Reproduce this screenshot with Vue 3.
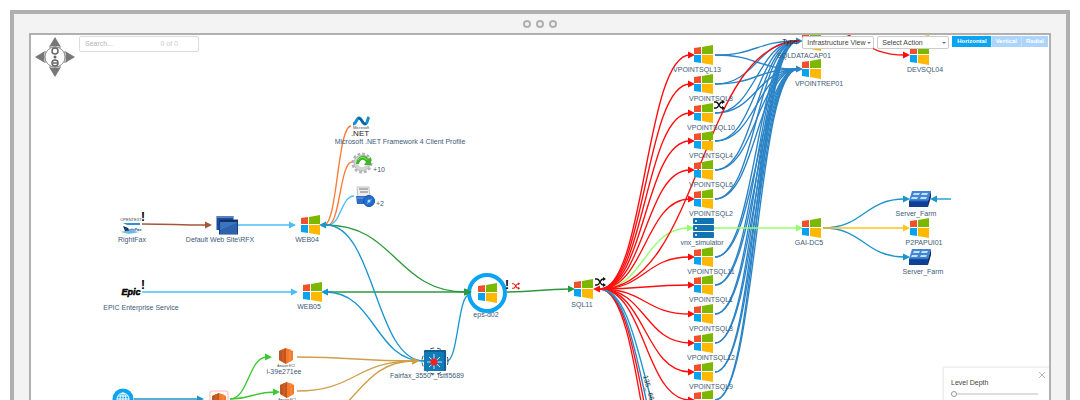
<script setup>
import { ref } from 'vue'

const LAYOUTS = ['Horizontal', 'Vertical', 'Radial']

const RED = '#ff0d0d'
const BLUE = '#2a83c6'
const CYAN = '#1a96cd'
const SKY = '#4dbdf7'
const GREEN = '#2a9a3c'
const ORANGE = '#fb7a35'
const TAN = '#cfa04a'

const view = ref('Infrastructure View')
const action = ref('Select Action')
const layout = ref('Horizontal')
const search = ref('')
const depth = ref(0)
const panelOpen = ref(true)

const sqlServers = [
  { name: 'VPOINTSQL13', y: 55, labelX: 697 },
  { name: 'VPOINTSQL8', y: 84 },
  { name: 'VPOINTSQL10', y: 113 },
  { name: 'VPOINTSQL4', y: 141 },
  { name: 'VPOINTSQL6', y: 170 },
  { name: 'VPOINTSQL2', y: 199 },
  { name: 'VPOINTSQL11', y: 257 },
  { name: 'VPOINTSQL1', y: 285 },
  { name: 'VPOINTSQL3', y: 314 },
  { name: 'VPOINTSQL12', y: 343 },
  { name: 'VPOINTSQL9', y: 372 },
  { y: 400 },
]

const nodes = [
  ...sqlServers.map((s) => ({
    icon: 'windows',
    x: 704,
    y: s.y,
    label: s.name,
    labelX: s.labelX ?? 711,
  })),
  { icon: 'storage', x: 704, y: 228, label: 'vnx_simulator', labelX: 702 },
  { icon: 'windows', x: 812, y: 41, label: 'SQLDATACAP01', labelX: 804 },
  { icon: 'windows', x: 812, y: 69, label: 'VPOINTREP01', labelX: 819 },
  { icon: 'windows', x: 812, y: 228, label: 'GAI-DC5', labelX: 809 },
  { icon: 'windows', x: 920, y: 26 },
  { icon: 'windows', x: 920, y: 55, label: 'DEVSQL04', labelX: 925 },
  { icon: 'farm', x: 920, y: 199, label: 'Server_Farm', labelX: 916 },
  { icon: 'windows', x: 920, y: 228, label: 'P2PAPUI01', labelX: 924 },
  { icon: 'farm', x: 920, y: 257, label: 'Server_Farm', labelX: 923 },
  { icon: 'rightfax', x: 131, y: 225, label: 'RightFax', labelX: 132 },
  { icon: 'website', x: 227, y: 225, label: 'Default Web Site\\RFX', labelX: 220 },
  { icon: 'windows', x: 311, y: 225, label: 'WEB04', labelX: 307 },
  { icon: 'epic', x: 131, y: 292, label: 'EPIC Enterprise Service', labelX: 141, drop: 18 },
  { icon: 'windows', x: 313, y: 292, label: 'WEB05', labelX: 309 },
  { icon: 'dotnet', x: 361, y: 127, label: 'Microsoft .NET Framework 4 Client Profile', labelX: 400 },
  { icon: 'gear', x: 362, y: 163, label: '+10', labelX: 379, drop: 9 },
  { icon: 'installer', x: 365, y: 197, label: '+2', labelX: 380, drop: 9 },
  { icon: 'windows', x: 488, y: 293, label: 'eps-d02', labelX: 486, drop: 24 },
  { icon: 'windows', x: 584, y: 289, label: 'SQL11', labelX: 582, drop: 18 },
  { icon: 'switch', x: 435, y: 361, label: 'Fairfax_3550*_fstfl5689', labelX: 427 },
  { icon: 'ec2', x: 286, y: 357, label: 'i-39e271ee', labelX: 284 },
  { icon: 'ec2', x: 287, y: 391 },
  { icon: 'ec2', x: 219, y: 402 },
  { icon: 'globe', x: 123, y: 399 },
]

const edges = [
  ...sqlServers.flatMap((s) => [
    edge(715, s.y, 798, 41, BLUE, false),
    edge(715, s.y, 798, 69, BLUE, false),
  ]),
  edge(790, 41, 803, 41, BLUE),
  edge(790, 69, 803, 69, BLUE),
  edge(600, 289, 694, 228, '#95ff6b'),
  ...sqlServers.map((s) => edge(600, 289, 695, s.y, RED)),
  edge(600, 289, 694, 520, RED),
  edge(600, 289, 694, 555, RED),
  edge(600, 289, 694, 495, BLUE),
  edge(600, 289, 694, 460, CYAN),
  edge(600, 289, 800, 41, RED, false),
  edge(714, 228, 803, 228, '#95ff6b'),
  edge(823, 228, 910, 199, CYAN),
  edge(823, 228, 910, 257, CYAN),
  edge(823, 228, 910, 228, '#ffc31f'),
  edge(951, 199, 930, 199, CYAN),
  edge(815, 28, 910, 55, RED),
  edge(142, 224, 212, 225, '#a5563a'),
  edge(238, 225, 296, 225, SKY),
  edge(142, 292, 298, 292, SKY),
  edge(324, 225, 351, 126, ORANGE, false),
  edge(328, 225, 352, 162, ORANGE, false),
  edge(328, 225, 354, 196, SKY, false),
  edge(326, 225, 471, 292, GREEN),
  edge(326, 292, 471, 292, GREEN),
  edge(326, 225, 424, 361, CYAN, false),
  edge(326, 292, 424, 361, CYAN, false),
  edge(332, 225, 319, 225, CYAN),
  edge(332, 292, 321, 292, CYAN),
  edge(297, 357, 419, 361, TAN),
  edge(297, 391, 419, 361, TAN),
  edge(297, 426, 419, 361, TAN),
  edge(447, 361, 469, 295, CYAN, false),
  edge(507, 292, 575, 289, GREEN),
  edge(610, 289, 593, 289, RED),
  edge(230, 399, 272, 357, '#3cc832'),
  edge(230, 399, 280, 392, '#3cc832'),
  edge(134, 399, 204, 399, CYAN),
]

// Horizontal tree link: both control points sit halfway between the ends
function edge(x1, y1, x2, y2, color, arrow = true) {
  const side = Math.sign(x2 - x1)
  const end = arrow ? x2 - side * 5 : x2
  const mid = (x1 + end) / 2
  return {
    color,
    d: `M${x1} ${y1}C${mid} ${y1} ${mid} ${y2} ${end} ${y2}`,
    head: arrow ? `M${x2} ${y2}l${-side * 7} -3.5v7z` : '',
  }
}
</script>

<template>
  <main class="page">
    <div class="frame">
      <div class="titlebar">
        <span v-for="n in 3" :key="n" class="dot"></span>
      </div>

      <section class="screen">
        <svg class="graph" role="img" aria-label="Dependency map">
          <defs>
            <symbol id="windows" viewBox="-12 -12 24 24">
              <path d="M-10 -7L-3 -8V-1H-10z" fill="#f1502a" />
              <path d="M-2 -8L9 -10V-1H-2z" fill="#7db800" />
              <path d="M-10 0H-3V8L-10 7z" fill="#06a4ef" />
              <path d="M-2 0H9V10L-2 8z" fill="#ffb800" />
            </symbol>

            <symbol id="storage" viewBox="-12 -12 24 24">
              <g fill="#1173b3">
                <rect x="-11" y="-10" width="21" height="6" rx="1" />
                <rect x="-11" y="-3" width="21" height="6" rx="1" />
                <rect x="-11" y="4" width="21" height="6" rx="1" />
              </g>
              <g fill="#fff">
                <circle cx="-8" cy="-7" r="1" />
                <circle cx="-8" cy="0" r="1" />
                <circle cx="-8" cy="7" r="1" />
              </g>
            </symbol>

            <symbol id="farm" viewBox="-12 -12 24 24">
              <path d="M-8 -8H11L8 2H-11z" fill="#3f86d6" />
              <path d="M-11 2H8V8H-11z" fill="#0d3f94" />
              <path d="M11 -8V-2L8 8V2z" fill="#082c66" />
              <path
                d="M-6 -6h6l-1 2h-6zM2 -6h6l-1 2h-6zM-8 -2h6l-1 2h-6zM1 -2h6l-1 2h-6z"
                fill="#c8e0f6"
              />
              <path d="M-11 2H8" stroke="#1f62b8" />
            </symbol>

            <symbol id="website" viewBox="-12 -12 24 24">
              <rect x="-10.500" y="-9" width="17" height="14" fill="#1b4d9a" />
              <path d="M-10 -8H6" stroke="#9cb9dd" />
              <rect x="-7.500" y="-5" width="18" height="14" fill="#3c74c0" stroke="#123f82" />
              <path d="M-7 -4H10" stroke="#123265" stroke-width="2" />
              <path d="M-7 9V5L10 -2V9z" fill="#2c62ae" />
            </symbol>

            <symbol id="rightfax" viewBox="-12 -12 24 24">
              <text class="logo-open" x="0" y="-4">OPENTEXT</text>
              <path d="M-8 -2H9V0H-4z" fill="#2795d6" />
              <path d="M-8 1L-3 3L-1 8L-4 6L-5 8z" fill="#14263d" />
              <text class="logo-fax" x="2" y="6">RightFax</text>
              <path d="M-10 7Q-2 4 8 7Q-2 10 -6 8z" fill="#68b9e8" />
            </symbol>

            <symbol id="epic" viewBox="-12 -12 24 24">
              <text class="logo-epic" x="0" y="3">Epic</text>
            </symbol>

            <symbol id="dotnet" viewBox="-12 -12 24 24">
              <path d="M-8 -3C-4 -3 -5 -9 -2 -9C1 -9 1 -3 4 -3C7 -3 6 -8 8 -10" fill="none" stroke="#158fc9" stroke-width="3" />
              <path d="M-3 -9C1 -9 1 -3 5 -3" fill="none" stroke="#0b5a9c" stroke-width="2" />
              <text class="logo-ms" x="0" y="2">Microsoft</text>
              <text class="logo-net" x="-1" y="9">.NET</text>
            </symbol>

            <symbol id="gear" viewBox="-12 -12 24 24">
              <circle r="9" fill="none" stroke="#b4b4b4" stroke-width="3" stroke-dasharray="2.800 1.900" />
              <circle r="6" fill="none" stroke="#d4d4d4" stroke-width="4" />
              <circle r="8" fill="none" stroke="#bdbdbd" />
              <path d="M-6 1C-5 -9 5 -9 6 -4L9 -6V2H2L4 -1C1 -5 -2 -3 -3 1z" fill="#43b52c" />
              <path d="M-4 -3C-1 -7 3 -6 5 -3" fill="none" stroke="#8fe070" />
            </symbol>

            <symbol id="installer" viewBox="-12 -12 24 24">
              <path d="M-8 -10H4L5 2H-7z" fill="#ededed" stroke="#c4c4c4" />
              <path d="M-6 -8H3M-5 -5H3" stroke="#777" />
              <path d="M-9 -1H4V7H-8z" fill="#2b6cc9" />
              <path d="M-8 1H3" stroke="#79a8e6" />
              <circle cx="4" cy="4" r="5.500" fill="#1f6fd0" stroke="#1553a8" />
              <path d="M4 4L7 2M4 4L2 7" stroke="#6fb0f0" />
              <circle cx="4" cy="4" r="1.500" fill="#b5d6f8" />
            </symbol>

            <symbol id="switch" viewBox="-16 -16 32 32">
              <circle r="13" fill="none" stroke="#444c58" stroke-dasharray="4 3" />
              <rect x="-11" y="-11" width="22" height="21" rx="1" fill="#0c5f97" />
              <rect x="-11" y="-9" width="20" height="19" rx="1" fill="#137ab8" />
              <path d="M-1 -7V8M-8 1H7M-6 -4L5 6M5 -4L-6 6" stroke="#cce5f4" />
              <circle cx="-1" cy="1" r="3.500" fill="#fb1d1d" />
            </symbol>

            <symbol id="ec2" viewBox="-12 -12 24 24">
              <path d="M0 -9L7 -6V3L0 7L-7 3V-6z" fill="#f47a2a" />
              <path d="M0 -9V7L-7 3V-6z" fill="#bf5520" />
              <path d="M-3 -8V5" stroke="#da6a2c" />
              <path d="M3 -7L4 -8V5" stroke="#fb9450" fill="none" />
              <text class="logo-ec2" x="0" y="10">Amazon EC2</text>
            </symbol>

            <symbol id="globe" viewBox="-12 -12 24 24">
              <circle r="10.500" fill="#0ba4f3" />
              <g fill="none" stroke="#fff">
                <circle r="6" />
                <ellipse rx="3" ry="6" />
                <path d="M0 -6V6M-6 0H6M-5 -3H5M-5 3H5" />
              </g>
            </symbol>

            <symbol id="shuffle" viewBox="0 0 12 10">
              <path
                d="M0 2H2C5 2 5 8 8 8H9M0 8H2C5 8 5 2 8 2H9"
                fill="none"
                stroke="currentColor"
                stroke-width="1.500"
              />
              <path d="M8 0L11 2L8 4zM8 6L11 8L8 10z" fill="currentColor" />
            </symbol>
          </defs>

          <g transform="translate(-31 -35)">
            <g class="edges">
              <template v-for="(item, i) in edges" :key="i">
                <path class="link" :d="item.d" :stroke="item.color" />
                <path v-if="item.head" :d="item.head" :fill="item.color" />
              </template>
            </g>

            <circle class="selected" cx="487" cy="293" r="18" />
            <path d="M472 292l-7 -3.5v7z" :fill="GREEN" />
            <rect class="boxed" x="210" y="391" width="18" height="24" rx="2" />

            <g v-for="(node, i) in nodes" :key="i">
              <use
                v-if="node.icon === 'switch'"
                href="#switch"
                :x="node.x - 16"
                :y="node.y - 16"
                width="32"
                height="32"
              />
              <use
                v-else
                :href="`#${node.icon}`"
                :x="node.x - 12"
                :y="node.y - 12"
                width="24"
                height="24"
              />
              <text v-if="node.label" class="label" :x="node.labelX" :y="node.y + (node.drop ?? 17)">
                {{ node.label }}
              </text>
            </g>

            <g class="alert">
              <text x="143" y="221">!</text>
              <text x="143" y="289">!</text>
              <text x="507" y="289">!</text>
            </g>
            <use class="shuffle" href="#shuffle" x="595" y="277" width="12" height="10" />
            <use class="shuffle" href="#shuffle" x="714" y="100" width="12" height="10" />
            <use class="shuffle warn" href="#shuffle" x="512" y="282" width="9" height="8" />
            <text class="port" transform="translate(643 376) rotate(75)">135_-66</text>
          </g>
        </svg>

        <header class="toolbar">
          <svg class="compass" viewBox="0 0 40 40" aria-hidden="true">
            <g fill="#777">
              <path d="M20 0L26 10Q20 8 14 10z" />
              <path d="M20 40L26 30Q20 32 14 30z" />
              <path d="M0 20L10 14Q8 20 10 26z" />
              <path d="M40 20L30 14Q32 20 30 26z" />
            </g>
            <g fill="none" stroke="#999">
              <circle cx="20" cy="20" r="10" />
              <path d="M14 11Q20 8 26 11M14 29Q20 32 26 29M11 14Q8 20 11 26M29 14Q32 20 29 26" />
            </g>
            <g fill="none" stroke="#666" stroke-width="1.500">
              <circle cx="20" cy="14" r="3" />
              <circle cx="20" cy="26" r="3" />
              <path d="M18 26h4" />
            </g>
            <circle cx="20" cy="20" r="1.500" fill="#666" />
          </svg>

          <label class="search">
            <input v-model="search" type="text" placeholder="Search..." aria-label="Search" />
            <span>0 of 0</span>
          </label>

          <div class="controls">
            <label class="type" for="view">Type:</label>
            <span class="select">
              <select id="view" v-model="view">
                <option>Infrastructure View</option>
              </select>
            </span>
            <span class="select">
              <select v-model="action" aria-label="Action">
                <option>Select Action</option>
              </select>
            </span>
            <div class="layouts">
              <button
                v-for="name in LAYOUTS"
                :key="name"
                type="button"
                :class="{ active: layout === name }"
                @click="layout = name"
              >
                {{ name }}
              </button>
            </div>
          </div>
        </header>

        <aside v-if="panelOpen" class="panel">
          <button class="close" type="button" aria-label="Close" @click="panelOpen = false">
            <svg viewBox="0 0 8 8"><path d="M1 1L7 7M7 1L1 7" stroke="#bbb" /></svg>
          </button>
          <label for="depth">Level Depth</label>
          <input id="depth" v-model="depth" type="range" min="0" max="10" />
        </aside>
      </section>
    </div>
  </main>
</template>

<style>
body {
  margin: 0;
  background: #fff;
}
</style>

<style scoped>
.page {
  box-sizing: border-box;
  height: 100vh;
  padding: 10px 10px 0;
  display: flex;
  overflow: hidden;
  font-family: "Liberation Sans", Arial, sans-serif;
  font-size: 7px;
}

.frame {
  flex: 1;
  display: flex;
  flex-direction: column;
  padding: 0 15px;
  border: 4px solid #b0b0b0;
  border-bottom: 0;
  background: #f3f3f3;
}

.titlebar {
  height: 19px;
  display: flex;
  align-items: center;
  justify-content: center;
  gap: 5px;
}

.dot {
  box-sizing: border-box;
  width: 8px;
  height: 8px;
  border: 2px solid #b0b0b0;
  border-radius: 50%;
}

.screen {
  position: relative;
  flex: 1;
  display: flex;
  flex-direction: column;
  justify-content: space-between;
  border: 2px solid #b0b0b0;
  border-bottom: 0;
  background: #fff;
  overflow: hidden;
}

.graph {
  position: absolute;
  inset: 0;
  width: 100%;
  height: 100%;
}

.link {
  fill: none;
  stroke-width: 1.35;
}

.label {
  fill: #3d5a79;
  text-anchor: middle;
}

.selected {
  fill: #fff;
  stroke: #0ba4f3;
  stroke-width: 4;
}

.boxed {
  fill: #fff;
  stroke: #f7b5b0;
}

.alert {
  fill: #000;
  font-size: 12px;
  font-weight: 700;
  text-anchor: middle;
}

.shuffle {
  color: #111;
}

.shuffle.warn {
  color: #f01818;
}

.port {
  fill: #333;
}

.logo-open,
.logo-fax,
.logo-ms {
  font-size: 4px;
  fill: #444;
  text-anchor: middle;
}

.logo-ec2 {
  font-size: 3px;
  fill: #444;
  text-anchor: middle;
}

.logo-fax {
  font-style: italic;
  font-weight: 700;
  fill: #17518c;
}

.logo-epic {
  font-size: 9px;
  font-style: italic;
  font-weight: 700;
  fill: #000;
  stroke: #000;
  stroke-width: 0.5;
  text-anchor: middle;
}

.logo-net {
  font-size: 8px;
  fill: #222;
  text-anchor: middle;
}

.toolbar {
  position: relative;
  display: flex;
  align-items: flex-start;
  padding: 1px 1px 0 4px;
}

.compass {
  width: 40px;
  height: 40px;
  margin: 1px 4px 0 0;
}

.search {
  box-sizing: border-box;
  width: 120px;
  height: 16px;
  display: flex;
  align-items: center;
  padding: 0 20px 1px 5px;
  border: 1px solid #ddd;
  border-radius: 2px;
  background: #fff;
  color: #ccc;
}

.search input {
  flex: 1;
  min-width: 0;
  padding: 0;
  border: 0;
  outline: 0;
  background: none;
  font: inherit;
  color: #555;
}

.search input::placeholder {
  color: #b5b5b5;
}

.controls {
  margin-left: auto;
  display: flex;
  align-items: flex-start;
  gap: 3px;
}

.type {
  line-height: 12px;
  color: #222;
}

.select {
  position: relative;
  width: 72px;
}

.select::after {
  content: "";
  position: absolute;
  top: 6px;
  right: 3px;
  border: 2px solid transparent;
  border-top-color: #777;
  pointer-events: none;
}

.select select {
  box-sizing: border-box;
  display: block;
  width: 100%;
  height: 13px;
  padding: 0 4px;
  border: 1px solid #ccc;
  border-radius: 2px;
  background: #fff;
  appearance: none;
  font: inherit;
  color: #444;
}

.layouts {
  display: flex;
}

.layouts button {
  height: 11px;
  padding: 0 4px;
  border: 0;
  border-left: 1px solid #c4e2fc;
  background: #add5fc;
  font: inherit;
  font-size: 6px;
  font-weight: 700;
  line-height: 11px;
  color: #fff;
  cursor: pointer;
}

.layouts button.active {
  border-color: #0ba4f3;
  background: #0ba4f3;
}

.panel {
  position: relative;
  align-self: flex-end;
  box-sizing: border-box;
  width: 106px;
  display: flex;
  flex-direction: column;
  gap: 2px;
  padding: 11px 11px 0 7px;
  border-left: 1px solid #eee;
  border-top: 1px solid #eee;
  background: #fff;
  box-shadow: 0 0 2px #e4e4e4;
  color: #444;
}

.close {
  position: absolute;
  top: 3px;
  right: 3px;
  width: 8px;
  height: 8px;
  padding: 0;
  border: 0;
  background: none;
  cursor: pointer;
}

.close svg {
  display: block;
}

.panel input {
  width: 100%;
  height: 12px;
  margin: 0;
  appearance: none;
  background: none;
}

.panel input::-webkit-slider-runnable-track {
  height: 2px;
  background: #ddd;
}

.panel input::-webkit-slider-thumb {
  appearance: none;
  box-sizing: border-box;
  width: 6px;
  height: 6px;
  margin-top: -2px;
  border: 1px solid #999;
  border-radius: 50%;
  background: #fff;
}
</style>
